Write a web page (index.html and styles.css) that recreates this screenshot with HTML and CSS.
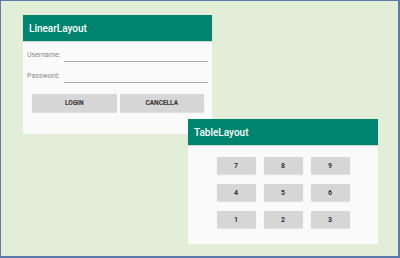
FILE: index.html
```html
<!DOCTYPE html>
<html lang="en">
<head>
    <meta charset="UTF-8">
    <meta name="viewport" content="width=device-width, initial-scale=1.0">
    <title>Layouts</title>
    <link rel="stylesheet" href="styles.css">
</head>
<body>
    <div class="frame">
        <div class="window linear">
            <div class="bar">LinearLayout</div>
            <div class="content">
                <div class="field">
                    <label>Username:</label>
                    <div class="line"></div>
                </div>
                <div class="field">
                    <label>Password:</label>
                    <div class="line"></div>
                </div>
                <div class="btns">
                    <button class="btn">LOGIN</button>
                    <button class="btn">CANCELLA</button>
                </div>
            </div>
        </div>

        <div class="window table">
            <div class="bar">TableLayout</div>
            <div class="grid">
                <button class="key">7</button>
                <button class="key">8</button>
                <button class="key">9</button>
                <button class="key">4</button>
                <button class="key">5</button>
                <button class="key">6</button>
                <button class="key">1</button>
                <button class="key">2</button>
                <button class="key">3</button>
            </div>
        </div>
    </div>
</body>
</html>
```

FILE: styles.css
```css
* {
    box-sizing: border-box;
}

body {
    margin: 0;
    font-family: Roboto, "Liberation Sans", sans-serif;
}

.frame {
    position: relative;
    width: 400px;
    height: 258px;
    background-color: #e2eed8;
    border: 1px solid #5b7bab;
    border-right-width: 2px;
    border-bottom-width: 2px;
}

.window {
    position: absolute;
    background-color: #fafafa;
}

.linear {
    left: 22px;
    top: 14px;
    width: 189px;
    height: 119px;
}

.table {
    left: 187px;
    top: 118px;
    width: 190px;
    height: 125px;
}

.bar {
    background-color: #00846f;
    color: #fff;
    font-size: 10px;
    font-weight: 500;
    height: 26px;
    line-height: 27px;
    padding-left: 6px;
    box-shadow: 0 1px 1px rgba(0, 0, 0, 0.15);
}

.content {
    padding: 0 4px;
}

.field {
    display: flex;
    align-items: flex-end;
    height: 21px;
    gap: 4px;
}

.field label {
    font-size: 7px;
    color: #888;
    padding-bottom: 3px;
}

.line {
    flex: 1;
    border-bottom: 1px solid #aaa;
}

.btns {
    display: flex;
    gap: 3px;
    padding: 11px 4px 0 5px;
}

.btn {
    flex: 1;
    height: 18px;
    border: none;
    border-radius: 1px;
    background-color: #d6d6d6;
    color: #333;
    font-family: Roboto, "Liberation Sans", sans-serif;
    font-size: 6.5px;
    font-weight: 700;
    padding: 0;
    box-shadow: 0 1px 1px rgba(0, 0, 0, 0.12);
}

.grid {
    display: grid;
    grid-template-columns: repeat(3, 39px);
    grid-auto-rows: 17px;
    column-gap: 8px;
    row-gap: 10px;
    justify-content: center;
    padding-top: 12px;
}

.key {
    border: none;
    border-radius: 1px;
    background-color: #d6d6d6;
    color: #333;
    font-family: Roboto, "Liberation Sans", sans-serif;
    font-size: 7px;
    font-weight: 700;
    padding: 0;
    box-shadow: 0 1px 1px rgba(0, 0, 0, 0.12);
}
```
